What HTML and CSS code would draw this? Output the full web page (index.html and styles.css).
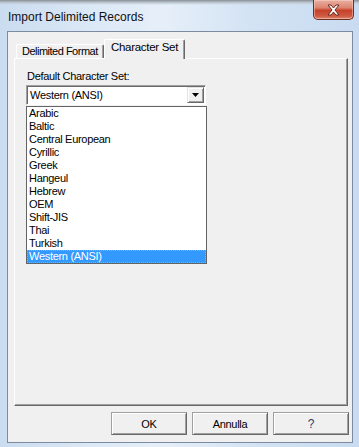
FILE: index.html
```html
<!DOCTYPE html>
<html lang="en">
<head>
    <meta charset="UTF-8">
    <title>Import Delimited Records</title>
    <link rel="stylesheet" href="styles.css">
</head>
<body>

    <div class="window">
        <div class="titlebar">
            <span class="title">Import Delimited Records</span>
            <span class="close">
                <svg width="15" height="12" viewBox="0 0 15 12">
                    <path d="M2 1h3l2.5 3 2.5-3h3l-4 5 4 5h-3L7.5 8 5 11H2l4-5z" fill="#fff" stroke="#6a2b22" stroke-width="1" stroke-linejoin="round"/>
                </svg>
            </span>
        </div>

        <div class="client">
            <div class="tabctl">
                <div class="tabrow">
                    <div class="tab">Delimited Format</div>
                    <div class="tab active">Character Set</div>
                </div>
                <div class="panel">
                    <div class="field_label">Default Character Set:</div>
                    <div class="combo">
                        <span class="combo_value">Western (ANSI)</span>
                        <span class="combo_btn">
                            <svg width="7" height="4" viewBox="0 0 7 4"><path d="M0 0h7L3.5 4z" fill="#000"/></svg>
                        </span>
                    </div>
                    <ul class="list">
                        <li>Arabic</li>
                        <li>Baltic</li>
                        <li>Central European</li>
                        <li>Cyrillic</li>
                        <li>Greek</li>
                        <li>Hangeul</li>
                        <li>Hebrew</li>
                        <li>OEM</li>
                        <li>Shift-JIS</li>
                        <li>Thai</li>
                        <li>Turkish</li>
                        <li class="selected">Western (ANSI)</li>
                    </ul>
                </div>
            </div>

            <div class="buttons">
                <button class="btn">OK</button>
                <button class="btn">Annulla</button>
                <button class="btn help">?</button>
            </div>
        </div>
    </div>

</body>
</html>
```

FILE: styles.css
```css
body {
    margin: 0;
    font-family: "Liberation Sans", Arial, sans-serif;
    font-size: 11px;
    letter-spacing: -0.3px;
    color: #000;
}
.window {
    width: 359px;
    height: 447px;
    display: flex;
    flex-direction: column;
    background:
        linear-gradient(to bottom, #8a8f96 0, #c3ced9 3px, rgba(0, 0, 0, 0) 5px),
        linear-gradient(to right, #cadcf0 0, #dbe8f6 25%, #e6eff9 45%, #d3e3f4 70%, #c8dbf0 100%);
}
.titlebar {
    height: 31px;
    display: flex;
    align-items: flex-start;
    padding-left: 8px;
}
.title {
    font-size: 12px;
    letter-spacing: 0;
    line-height: 15px;
    padding-top: 10px;
    color: #111;
}
.close {
    margin-left: auto;
    margin-right: 5px;
    width: 41px;
    height: 20px;
    box-sizing: border-box;
    border: 1px solid #6f2e25;
    border-top: none;
    border-radius: 0 0 5px 5px;
    background: linear-gradient(to bottom, #eab0a2 0, #dc8571 40%, #c7412b 55%, #cf5a42 85%, #e08b74 100%);
    box-shadow: inset 0 0 0 1px rgba(255, 220, 210, 0.45);
    display: flex;
    align-items: center;
    justify-content: center;
}
.client {
    flex: 1;
    margin: 0 6px 4px 7px;
    border: 1px solid #7d8ba0;
    background: #f0f0f0;
    display: flex;
    flex-direction: column;
}
.tabctl {
    margin: 7px 4px 0 6px;
}
.tabrow {
    height: 19px;
    display: flex;
    align-items: flex-end;
    padding-left: 2px;
}
.tab {
    height: 14px;
    box-sizing: border-box;
    width: 88px;
    padding: 0 0 0 5px;
    line-height: 13px;
    letter-spacing: -0.5px;
    border-top: 1px solid #fff;
    border-left: 1px solid #fff;
    border-right: 1px solid #696969;
    border-radius: 2px 2px 0 0;
    box-shadow: inset -1px 0 #a0a0a0;
    white-space: nowrap;
    overflow: hidden;
}
.tab.active {
    position: relative;
    z-index: 1;
    height: 20px;
    width: 81px;
    margin-bottom: -1px;
    padding: 1px 0 0 6px;
    font-size: 11.5px;
    letter-spacing: -0.3px;
    background: #f0f0f0;
}
.panel {
    height: 348px;
    box-sizing: border-box;
    border-top: 1px solid #fff;
    border-left: 1px solid #fff;
    border-right: 1px solid #696969;
    border-bottom: 1px solid #696969;
    box-shadow: inset -1px -1px #a0a0a0;
    padding: 11px 0 0 11px;
}
.field_label {
    line-height: 13px;
    padding-left: 1px;
    margin-bottom: 2px;
}
.combo {
    width: 180px;
    height: 20px;
    box-sizing: border-box;
    display: flex;
    border-top: 1px solid #a0a0a0;
    border-left: 1px solid #a0a0a0;
    border-right: 1px solid #fff;
    border-bottom: 1px solid #fff;
    box-shadow: inset 1px 1px #696969;
    background: #fff;
    padding: 1px 1px 1px 2px;
}
.combo_value {
    flex: 1;
    line-height: 16px;
    padding-left: 1px;
}
.combo_btn {
    width: 17px;
    height: 16px;
    box-sizing: border-box;
    background: #f0f0f0;
    border-top: 1px solid #e3e3e3;
    border-left: 1px solid #e3e3e3;
    border-right: 1px solid #696969;
    border-bottom: 1px solid #696969;
    box-shadow: inset 1px 1px #fff, inset -1px -1px #a0a0a0;
    display: flex;
    align-items: center;
    justify-content: center;
}
.list {
    list-style: none;
    margin: 1px 0 0;
    padding: 0;
    width: 181px;
    box-sizing: border-box;
    border: 1px solid #646464;
    background: #fff;
}
.list li {
    height: 13px;
    line-height: 13px;
    padding-left: 2px;
    white-space: nowrap;
}
.list li.selected {
    background: #3399ff;
    color: #fff;
    outline: 1px dotted #e3a04a;
    outline-offset: -1px;
}
.buttons {
    display: flex;
    justify-content: flex-end;
    gap: 5px;
    margin-top: 6px;
    padding-right: 3px;
}
.btn {
    width: 76px;
    height: 23px;
    box-sizing: border-box;
    font-family: "Liberation Sans", Arial, sans-serif;
    font-size: 11px;
    letter-spacing: -0.3px;
    color: #000;
    background: #f0f0f0;
    border-top: 1px solid #a0a0a0;
    border-left: 1px solid #a0a0a0;
    border-right: 1px solid #696969;
    border-bottom: 1px solid #696969;
    box-shadow: inset 1px 1px #fff, inset -1px -1px #a0a0a0;
    padding: 0;
}
.btn.help {
    color: #2a3f66;
    font-size: 12px;
}
```
